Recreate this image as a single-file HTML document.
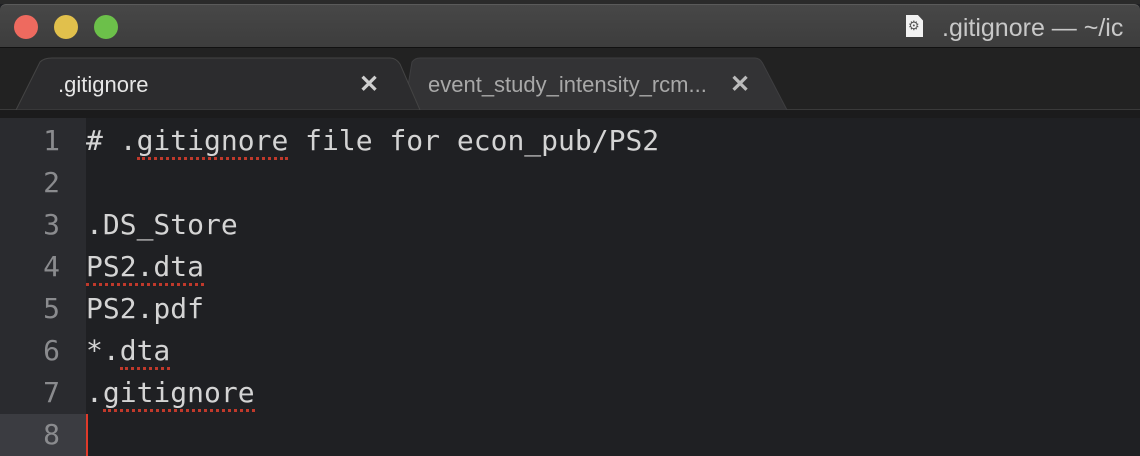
<!DOCTYPE html>
<html><head><meta charset="utf-8"><style>
*{margin:0;padding:0;box-sizing:border-box}
body{width:1140px;height:456px;overflow:hidden;background:#1f2023;position:relative;font-family:"Liberation Sans",sans-serif}
.top{position:absolute;left:0;top:0;width:1140px;height:4px;background:#2a2a2a}
.title{position:absolute;left:0;top:4px;width:1140px;height:44px;background:linear-gradient(#474747,#3d3d3d);border-top:1px solid #5a5a5a;border-radius:6px 6px 0 0;border-bottom:1px solid #111}
.dot{position:absolute;top:10px;width:24px;height:24px;border-radius:50%}
.ttl{position:absolute;left:942px;top:9px;color:#c8c8c8;font-size:25px;white-space:nowrap}
.fic{position:absolute;left:906px;top:10px;width:17px;height:22px;background:#f2f2f2;clip-path:polygon(0 0,70% 0,100% 25%,100% 100%,0 100%)}
.fic:after{content:"⚙";position:absolute;left:2px;top:3px;font-size:13px;color:#555}
.tabbar{position:absolute;left:0;top:48px;width:1140px;height:62px;background:#222222;border-bottom:1px solid #3a3a3a}
.sep{position:absolute;left:0;top:110px;width:1140px;height:8px;background:#1b1b1c}
.tab{position:absolute;font-size:22px;white-space:nowrap}
.gut{position:absolute;left:0;top:118px;width:86px;height:338px;background:#2a2b2f}
.cur{position:absolute;left:0;top:414px;width:86px;height:42px;background:#3b3c41}
.ln{position:absolute;left:0;width:60px;text-align:right;color:#8a8b8e;font-family:"DejaVu Sans Mono",monospace;font-size:28px;line-height:42px}
.code{position:absolute;left:86px;color:#d4d4d4;font-family:"DejaVu Sans Mono",monospace;font-size:28px;line-height:42px;white-space:pre}
.sp{border-bottom:3px dotted #c0392b;}
.caret{position:absolute;left:86px;top:414px;width:2px;height:42px;background:#e03a2a}
</style></head><body>
<div class="top"></div>
<div class="title">
<div class="dot" style="left:14px;background:#ee6a5f"></div>
<div class="dot" style="left:54px;background:#e1c04c"></div>
<div class="dot" style="left:94px;background:#6cc04a"></div>
<div class="fic"></div>
<div class="ttl">.gitignore — ~/ic</div>
</div>
<div class="tabbar"></div>
<svg style="position:absolute;left:0;top:48px" width="1140" height="62">
<path d="M404 62 L412 14 Q415 10 420 10 L755 10 Q760 10 763 16 L787 62 Z" fill="#333335" stroke="#3e3e40"/>
<path d="M16 62 L40 14 Q44 10 52 10 L390 10 Q396 10 400 16 L420 62 Z" fill="#2c2c2e" stroke="#444"/>
</svg>
<div class="tab" style="left:58px;top:72px;color:#e6e6e6">.gitignore</div>
<div class="tab" style="left:359px;top:70px;color:#cfcfcf;font-size:24px;font-weight:bold">✕</div>
<div class="tab" style="left:428px;top:72px;color:#a8a8a8">event_study_intensity_rcm...</div>
<div class="tab" style="left:730px;top:70px;color:#bbb;font-size:24px;font-weight:bold">✕</div>
<div class="sep"></div>
<div class="gut"></div>
<div class="cur"></div>
<div class="ln" style="top:120px">1</div>
<div class="ln" style="top:162px">2</div>
<div class="ln" style="top:204px">3</div>
<div class="ln" style="top:246px">4</div>
<div class="ln" style="top:288px">5</div>
<div class="ln" style="top:330px">6</div>
<div class="ln" style="top:372px">7</div>
<div class="ln" style="top:414px">8</div>
<div class="code" style="top:120px"># .<span class="sp">gitignore</span> file for econ_pub/PS2</div>
<div class="code" style="top:204px">.DS_Store</div>
<div class="code" style="top:246px"><span class="sp">PS2.dta</span></div>
<div class="code" style="top:288px">PS2.pdf</div>
<div class="code" style="top:330px">*.<span class="sp">dta</span></div>
<div class="code" style="top:372px">.<span class="sp">gitignore</span></div>
<div class="caret"></div>
</body></html>
